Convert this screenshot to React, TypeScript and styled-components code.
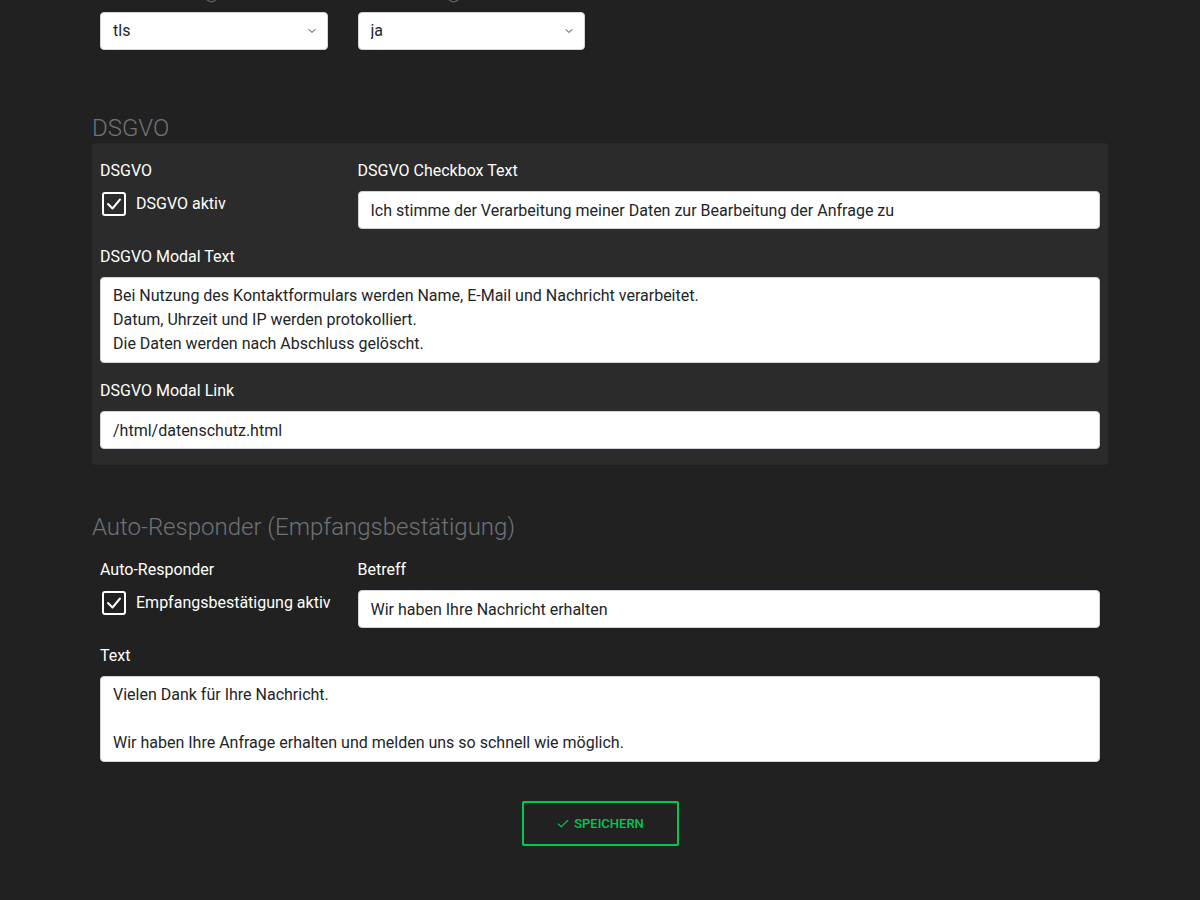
import React from 'react';
import styled, { createGlobalStyle } from 'styled-components';
import { Check, ChevronDown, Info } from 'lucide-react';

const GlobalStyle = createGlobalStyle`
  html, body { margin: 0; padding: 0; background: #212121; }
  body { font-family: Roboto, "Liberation Sans", sans-serif; color: #fff; overflow: hidden; }
`;

const Page = styled.div`
  max-width: 1016px;
  margin: 0 auto;
  padding-bottom: 40px;
`;

const Section = styled.section<{ $first?: boolean }>`
  margin-top: ${p => (p.$first ? '-41px' : '48px')};
`;

const Heading = styled.h2`
  margin: 0;
  font-size: 24px;
  line-height: 29px;
  font-weight: 300;
  color: #6f7378;
`;

const Panel = styled.div<{ $filled?: boolean }>`
  background: ${p => (p.$filled ? '#2b2b2b' : 'transparent')};
  border-radius: 4px;
  padding: 16px 8px;
  display: grid;
  grid-template-columns: repeat(4, minmax(0, 1fr));
  column-gap: 30px;
  row-gap: 16px;
`;

const Field = styled.div<{ $span?: number; $gap?: number }>`
  grid-column: span ${p => p.$span ?? 1};
  display: flex;
  flex-direction: column;
  gap: ${p => p.$gap ?? 8}px;
`;

const Label = styled.label`
  display: flex;
  align-items: center;
  gap: 8px;
  height: 24px;
  font-size: 16px;
  line-height: 24px;
  color: #fff;
  white-space: nowrap;
`;

const inputBase = `
  box-sizing: border-box;
  width: 100%;
  background: #fff;
  border: 1px solid #ced4da;
  border-radius: 4px;
  padding: 6px 12px;
  font-family: Roboto, "Liberation Sans", sans-serif;
  font-size: 16px;
  line-height: 24px;
  color: #212529;
  outline: none;
`;

const Input = styled.input`
  ${inputBase}
  height: 38px;
`;

const TextArea = styled.textarea`
  ${inputBase}
  height: 86px;
  resize: none;
  overflow: hidden;
`;

const SelectWrap = styled.div`
  position: relative;
`;

const Select = styled.select`
  ${inputBase}
  height: 38px;
  appearance: none;
  -webkit-appearance: none;
`;

const Chevron = styled(ChevronDown)`
  position: absolute;
  right: 10px;
  top: 13px;
  color: #343a40;
  pointer-events: none;
`;

const CheckRow = styled.label`
  display: flex;
  align-items: center;
  gap: 10px;
  font-size: 16px;
  line-height: 24px;
  color: #fff;
  white-space: nowrap;
  margin-top: 1px;
  padding-left: 2px;
`;

const Box = styled.span`
  box-sizing: border-box;
  flex: none;
  width: 24px;
  height: 24px;
  border: 2px solid #fff;
  border-radius: 3px;
  display: flex;
  align-items: center;
  justify-content: center;
`;

const Actions = styled.div`
  display: flex;
  justify-content: center;
  margin-top: 23px;
`;

const SaveButton = styled.button`
  box-sizing: border-box;
  width: 157px;
  height: 45px;
  background: transparent;
  border: 2px solid #00c853;
  border-radius: 2px;
  color: #00c853;
  font-family: Roboto, "Liberation Sans", sans-serif;
  font-size: 13px;
  font-weight: 500;
  text-transform: uppercase;
  display: flex;
  align-items: center;
  justify-content: center;
  gap: 4px;
  cursor: pointer;
`;

const HelpIcon = styled(Info)`
  flex: none;
  color: #666;
  margin-top: 8px;
  margin-bottom: -8px;
`;

const Checkbox: React.FC<{ label: string }> = ({ label }) => (
  <CheckRow>
    <Box>
      <svg width="18" height="18" viewBox="0 0 18 18" fill="none">
        <polyline points="3,9 7.5,13.5 15,4.5" stroke="#fff" strokeWidth="2" strokeLinecap="round" strokeLinejoin="round" />
      </svg>
    </Box>
    {label}
  </CheckRow>
);

export default function App() {
  return (
    <>
      <GlobalStyle />
      <Page>
        <Section $first>
          <Panel>
            <Field $gap={13}>
              <Label>SMTP Secure <HelpIcon size={15} /></Label>
              <SelectWrap>
                <Select defaultValue="tls">
                  <option value="tls">tls</option>
                  <option value="ssl">ssl</option>
                </Select>
                <Chevron size={12} strokeWidth={2} />
              </SelectWrap>
            </Field>
            <Field $gap={13}>
              <Label>SMTP Auth <HelpIcon size={15} /></Label>
              <SelectWrap>
                <Select defaultValue="ja">
                  <option value="ja">ja</option>
                  <option value="nein">nein</option>
                </Select>
                <Chevron size={12} strokeWidth={2} />
              </SelectWrap>
            </Field>
          </Panel>
        </Section>

        <Section>
          <Heading>DSGVO</Heading>
          <Panel $filled>
            <Field>
              <Label>DSGVO</Label>
              <Checkbox label="DSGVO aktiv" />
            </Field>
            <Field $span={3}>
              <Label>DSGVO Checkbox Text</Label>
              <Input defaultValue="Ich stimme der Verarbeitung meiner Daten zur Bearbeitung der Anfrage zu" />
            </Field>
            <Field $span={4}>
              <Label>DSGVO Modal Text</Label>
              <TextArea
                defaultValue={'Bei Nutzung des Kontaktformulars werden Name, E-Mail und Nachricht verarbeitet.\nDatum, Uhrzeit und IP werden protokolliert.\nDie Daten werden nach Abschluss gelöscht.'}
              />
            </Field>
            <Field $span={4}>
              <Label>DSGVO Modal Link</Label>
              <Input defaultValue="/html/datenschutz.html" />
            </Field>
          </Panel>
        </Section>

        <Section>
          <Heading>Auto-Responder (Empfangsbestätigung)</Heading>
          <Panel>
            <Field>
              <Label>Auto-Responder</Label>
              <Checkbox label="Empfangsbestätigung aktiv" />
            </Field>
            <Field $span={3}>
              <Label>Betreff</Label>
              <Input defaultValue="Wir haben Ihre Nachricht erhalten" />
            </Field>
            <Field $span={4}>
              <Label>Text</Label>
              <TextArea
                defaultValue={'Vielen Dank für Ihre Nachricht.\n\nWir haben Ihre Anfrage erhalten und melden uns so schnell wie möglich.'}
              />
            </Field>
          </Panel>
          <Actions>
            <SaveButton>
              <Check size={14} strokeWidth={2} />
              Speichern
            </SaveButton>
          </Actions>
        </Section>
      </Page>
    </>
  );
}
